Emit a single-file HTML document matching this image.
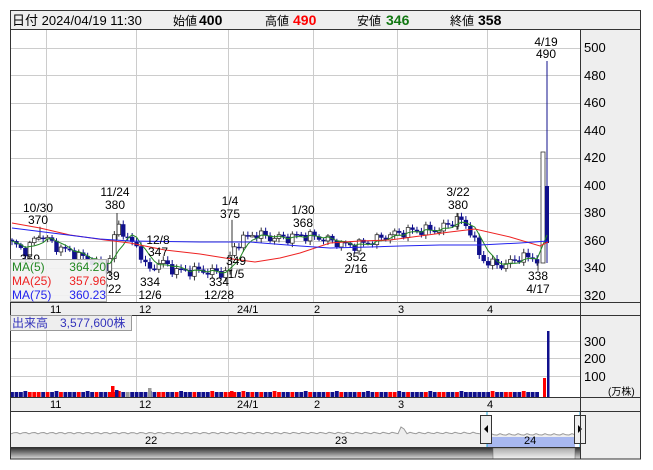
<!DOCTYPE html>
<html><head><meta charset="utf-8"><style>
html,body{margin:0;padding:0;background:#fff;width:653px;height:470px;overflow:hidden}
svg{display:block;font-family:"Liberation Sans","Noto Sans CJK JP",sans-serif}
</style></head><body>
<svg id="s" width="653" height="470" xmlns="http://www.w3.org/2000/svg">
<defs>
<linearGradient id="sb" x1="0" y1="0" x2="0" y2="1"><stop offset="0" stop-color="#333"/><stop offset="1" stop-color="#ddd"/></linearGradient>
<linearGradient id="th" x1="0" y1="0" x2="0" y2="1"><stop offset="0" stop-color="#aaa"/><stop offset="1" stop-color="#f4f4f4"/></linearGradient>
<clipPath id="cp"><rect x="10" y="29" width="570" height="273"/></clipPath>
</defs>
<rect x="10.5" y="10.5" width="630" height="19" fill="#eeeeee" stroke="#333"/>
<g font-size="13" fill="#000">
<text x="12" y="25">日付 2024/04/19 11:30</text>
<text x="173" y="25" font-size="12">始値</text><text x="199" y="25" font-weight="bold" font-size="14">400</text>
<text x="265" y="25" font-size="12">高値</text><text x="293" y="25" font-weight="bold" font-size="14" fill="#ff0000">490</text>
<text x="357" y="25" font-size="12">安値</text><text x="386" y="25" font-weight="bold" font-size="14" fill="#117711">346</text>
<text x="450" y="25" font-size="12">終値</text><text x="478" y="25" font-weight="bold" font-size="14">358</text>
</g>
<rect x="580" y="30" width="61" height="272" fill="#eeeeee"/>
<rect x="580" y="315" width="61" height="82" fill="#eeeeee"/>
<rect x="10" y="302" width="631" height="13" fill="#eeeeee"/>
<rect x="10" y="397" width="631" height="14" fill="#eeeeee"/>
<rect x="580" y="411" width="61" height="48" fill="#eeeeee"/>
<g id="grid" stroke="#cccccc" stroke-width="1"></g>
<g id="cand" clip-path="url(#cp)"></g>
<g id="vol"></g>
<g id="nav"></g>
<g fill="none" stroke="#333">
<rect x="10.5" y="10.5" width="630" height="448.5"/>
<line x1="580.5" y1="29" x2="580.5" y2="459"/>
<line x1="10" y1="302.5" x2="641" y2="302.5"/>
<line x1="10" y1="315.5" x2="641" y2="315.5"/>
<line x1="10" y1="397.5" x2="641" y2="397.5"/>
<line x1="10" y1="411.5" x2="641" y2="411.5"/>
<line x1="10" y1="447.5" x2="580" y2="447.5"/>
</g>
<g font-size="13" fill="#000" id="labels">
<text x="584" y="52">500</text><text x="584" y="80">480</text><text x="584" y="107">460</text><text x="584" y="135">440</text><text x="584" y="162">420</text><text x="584" y="190">400</text><text x="584" y="217">380</text><text x="584" y="245">360</text><text x="584" y="272">340</text><text x="584" y="300">320</text>
<text x="584" y="346">300</text><text x="584" y="363">200</text><text x="584" y="381">100</text>
<text x="608" y="395" font-size="10">(万株)</text>
</g>
<g font-size="11" fill="#000" id="mlab"></g>
<g font-size="12" fill="#000" text-anchor="middle">
<text x="546" y="46">4/19</text><text x="546" y="58">490</text>
<text x="458" y="196">3/22</text><text x="458" y="209">380</text>
<text x="303" y="214">1/30</text><text x="303" y="227">368</text>
<text x="230" y="205">1/4</text><text x="230" y="218">375</text>
<text x="115" y="196">11/24</text><text x="115" y="209">380</text>
<text x="38" y="212">10/30</text><text x="38" y="224">370</text>
<text x="158" y="244">12/8</text><text x="158" y="256">347</text>
<text x="356" y="261">352</text><text x="356" y="273">2/16</text>
<text x="538" y="280">338</text><text x="538" y="293">4/17</text>
<text x="150" y="286">334</text><text x="150" y="299">12/6</text>
<text x="219" y="286">334</text><text x="219" y="299">12/28</text>
<text x="236" y="265">349</text><text x="236" y="278">1/5</text>
<text x="113" y="280">39</text><text x="113" y="293">/22</text>
<text x="30" y="263">359</text>
</g>
<rect x="10.5" y="259.5" width="96" height="42" fill="#f2f2f2" fill-opacity="0.92" stroke="#aaa"/>
<g font-size="12">
<text x="12" y="271" fill="#228822">MA(5)</text><text x="106" y="271" fill="#228822" text-anchor="end">364.20</text>
<text x="12" y="285" fill="#ee2222">MA(25)</text><text x="106" y="285" fill="#ee2222" text-anchor="end">357.96</text>
<text x="12" y="299" fill="#2222ee">MA(75)</text><text x="106" y="299" fill="#2222ee" text-anchor="end">360.23</text>
</g>
<rect x="10.5" y="315.5" width="121" height="15" fill="#eeeeee" stroke="#999"/>
<text x="12" y="327" font-size="12" fill="#3333bb">出来高　3,577,600株</text>
</svg>
<script>
var NS="http://www.w3.org/2000/svg";
function el(p,t,a,txt){var e=document.createElementNS(NS,t);for(var k in a)e.setAttribute(k,a[k]);if(txt)e.textContent=txt;document.getElementById(p).appendChild(e);return e;}
var gx=[46,136,228,313,397,487];
var hy=[48,75,103,130,158,186,213,241,268,295];
gx.forEach(function(x){el("grid","line",{x1:x+.5,y1:30,x2:x+.5,y2:302});el("grid","line",{x1:x+.5,y1:316,x2:x+.5,y2:397});});
hy.forEach(function(y){el("grid","line",{x1:10,y1:y+.5,x2:580,y2:y+.5});});
[341,358,376].forEach(function(y){el("grid","line",{x1:10,y1:y+.5,x2:580,y2:y+.5});});
var ml=[["11",50],["12",139],["24/1",237],["2",314],["3",398],["4",487]];
ml.forEach(function(m){el("mlab","text",{x:m[1],y:313},m[0]);el("mlab","text",{x:m[1],y:408},m[0]);});
function Y(p){return 48+(500-p)*1.375;}
var kp=[[12,358],[25,352],[40,365],[55,356],[75,350],[95,344],[108,340],[115,365],[120,372],[128,360],[138,355],[148,337],[160,345],[175,338],[200,338],[225,336],[232,352],[240,360],[255,365],[270,362],[290,362],[300,364],[320,362],[345,357],[352,356],[370,359],[390,364],[410,367],[440,368],[458,376],[470,368],[480,348],[490,343],[505,342],[520,348],[535,347],[540,345]];
function interp(x){for(var i=0;i<kp.length-1;i++){if(x<=kp[i+1][0]){var t=(x-kp[i][0])/(kp[i+1][0]-kp[i][0]);return kp[i][1]+t*(kp[i+1][1]-kp[i][1]);}}return kp[kp.length-1][1];}
var N=119,xs=[],cl=[];
for(var i=0;i<N;i++){var x=12+i*4.45;xs.push(x);cl.push(interp(x)+2.8*Math.sin(i*1.7)+1.6*Math.cos(i*2.9));}
var prev=cl[0]+1;
for(var i=0;i<N;i++){var o=prev,c=cl[i],x=xs[i];var hi=Math.max(o,c)+1+Math.abs(Math.sin(i*3.1))*2,lo=Math.min(o,c)-1-Math.abs(Math.cos(i*2.3))*2;
 el("cand","line",{x1:x,y1:Y(hi),x2:x,y2:Y(lo),stroke:c>=o?"#333":"#10108c"});
 var t=Y(Math.max(o,c)),h=Math.max(1.5,Math.abs(Y(o)-Y(c)));
 if(c>=o)el("cand","rect",{x:x-1.8,y:t,width:3.6,height:h,fill:"#fff",stroke:"#333","stroke-width":0.8});
 else el("cand","rect",{x:x-2.2,y:t,width:4.4,height:h,fill:"#10108c"});
 var vc=c>o+0.3?"#ff0000":(c<o-0.3?"#10108c":"#999");
 var vh=5+(i%7==3?1:0);
 el("vol","rect",{x:x-1.9,y:397-vh,width:3.8,height:vh,fill:vc});
 prev=c;}
[[117,380,360],[232,375,355],[458,380,368],[538,345,338],[40,370,362]].forEach(function(w){el("cand","line",{x1:w[0],y1:Y(w[1]),x2:w[0],y2:Y(w[2]),stroke:"#333"});});
el("cand","rect",{x:541,y:152,width:4,height:111,fill:"#fff",stroke:"#333","stroke-width":0.8});
el("cand","line",{x1:547,y1:61,x2:547,y2:263,stroke:"#10108c"});
el("cand","rect",{x:545,y:186,width:4,height:57,fill:"#10108c"});
var ma5=[];for(var i=0;i<N;i++){var s=0,n=0;for(var j=Math.max(0,i-4);j<=i;j++){s+=cl[j];n++;}ma5.push(xs[i]+","+Y(s/n));}
ma5.push("547,"+Y(364));
el("cand","polyline",{points:ma5.join(" "),fill:"none",stroke:"#228822","stroke-width":1});
el("cand","polyline",{points:"12,223 40,228 70,235 105,240 130,243 165,250 200,254 225,258 255,262 280,258 300,253 330,243 360,241 390,240 420,236 450,232 475,229 510,237 540,246 548,242",fill:"none",stroke:"#ee2222","stroke-width":1});
el("cand","polyline",{points:"12,228 60,234 100,239 130,241 200,242 250,242 300,246 330,248 370,247 400,246 440,245 480,245 520,243 548,241",fill:"none",stroke:"#2222ee","stroke-width":1});
el("vol","rect",{x:111,y:386,width:3.5,height:11,fill:"#ff0000"});
el("vol","rect",{x:115,y:390,width:3.5,height:7,fill:"#10108c"});
el("vol","rect",{x:148,y:388,width:3.5,height:9,fill:"#999"});
el("vol","rect",{x:230,y:391,width:3.5,height:6,fill:"#ff0000"});
el("vol","rect",{x:543,y:378,width:3,height:19,fill:"#ff0000"});
el("vol","rect",{x:547,y:331,width:2.5,height:66,fill:"#10108c"});
var pts=[];
for(var x=11;x<=575;x+=3){var y=433+0.8*Math.sin(x*0.7)+(x>480?1.5:0);if(x>=399&&x<=406)y=425+Math.abs(x-402)*2;pts.push(x+","+y.toFixed(1));}
el("nav","polygon",{points:"11,447 "+pts.join(" ")+" 575,447",fill:"#eeeeee"});
el("nav","polyline",{points:pts.join(" "),fill:"none",stroke:"#999"});
el("nav","rect",{x:487,y:437,width:88,height:10,fill:"#a8b8f0"});
el("nav","line",{x1:487,y1:412,x2:487,y2:447,stroke:"#22aadd"});
el("nav","line",{x1:580,y1:412,x2:580,y2:447,stroke:"#22aadd"});
el("nav","text",{x:145,y:444,"font-size":"11"},"22");
el("nav","text",{x:335,y:444,"font-size":"11"},"23");
el("nav","text",{x:524,y:444,"font-size":"11"},"24");
el("nav","rect",{x:480.5,y:415.5,width:11,height:28,fill:"#eee",stroke:"#333"});
el("nav","polygon",{points:"484,429 488,425 488,433",fill:"#000"});
el("nav","rect",{x:574.5,y:415.5,width:11,height:28,fill:"#eee",stroke:"#333"});
el("nav","polygon",{points:"582,429 578,425 578,433",fill:"#000"});
el("nav","rect",{x:11,y:448,width:569,height:11,fill:"url(#sb)"});
el("nav","rect",{x:493,y:448,width:82,height:11,fill:"url(#th)",stroke:"#666","stroke-width":0.5});
</script>
</body></html>
